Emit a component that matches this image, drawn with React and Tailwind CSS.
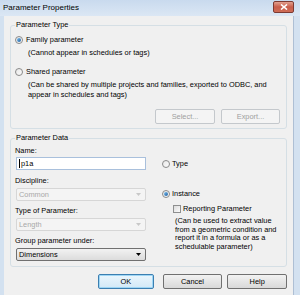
import React from "react";

const FONT = "font-['Liberation_Sans',Arial,sans-serif]";

function Radio({ checked }) {
  return (
    <span className="w-[8px] h-[8px] shrink-0 rounded-full border border-[#8a8a8a] bg-gradient-to-br from-[#e8e8e8] to-[#fbfbfb] flex items-center justify-center">
      {checked && <span className="w-[4px] h-[4px] rounded-full bg-gradient-to-br from-[#7fc2f2] to-[#1a5c9c]" />}
    </span>
  );
}

function Checkbox() {
  return <span className="w-[8px] h-[8px] shrink-0 border border-[#8e8f8f] bg-gradient-to-br from-[#dcdcdc] to-[#fbfbfb]" />;
}

function Btn({ children, disabled, primary, className = "" }) {
  const base = "h-[15px] flex items-center justify-center rounded-[2px] border";
  const look = disabled
    ? "border-[#c4c8cc] bg-[#f4f4f4] text-[#a0a0a0]"
    : primary
    ? "border-[#3c7fb1] bg-gradient-to-b from-[#eaf6fd] to-[#d3e9f7] text-black shadow-[inset_0_0_0_1px_#9ed6f5]"
    : "border-[#707070] bg-gradient-to-b from-[#f2f2f2] to-[#d9d9d9] text-black";
  return <div className={`${base} ${look} ${className}`}>{children}</div>;
}

function Select({ value, disabled }) {
  return (
    <div
      className={`ml-[1px] w-[130px] h-[13px] flex items-center justify-between pl-[2px] pr-[4px] rounded-[2px] border ${
        disabled
          ? "border-[#d6d6d6] bg-[#f4f4f4] text-[#a8a8a8]"
          : "border-[#707070] bg-gradient-to-b from-[#f2f2f2] to-[#dcdcdc] text-black"
      }`}
    >
      <span>{value}</span>
      <svg width="5" height="3" viewBox="0 0 5 3">
        <path d="M0 0h5L2.5 3z" fill={disabled ? "#c8c8c8" : "#000"} />
      </svg>
    </div>
  );
}

export default function App() {
  return (
    <div className={`w-[300px] h-[295px] flex flex-col bg-[#cfdff0] text-[7.4px] leading-[10px] text-black ${FONT}`}>
      {/* Title bar */}
      <div className="h-[16px] shrink-0 flex items-start justify-between bg-gradient-to-b from-[#c9daee] to-[#dbe7f4]">
        <span className="pl-[3px] pt-[2px] text-[8px] leading-[11px] text-black">Parameter Properties</span>
        <div className="mr-[6px] mt-[1px] w-[21px] h-[12px] rounded-[2px] border border-[#7d3a32] bg-gradient-to-b from-[#e2a08f] via-[#c85d4b] to-[#cf6d56] flex items-center justify-center">
          <svg width="8" height="6" viewBox="0 0 8 6">
            <path d="M1 0.5L7 5.5M7 0.5L1 5.5" stroke="#fff" strokeWidth="1.6" />
          </svg>
        </div>
      </div>

      <div className="flex-1 flex min-h-0">
        <div className="w-[4px] shrink-0 bg-[#d3e1f0]" />
        <div className="w-[290px] shrink-0 bg-[#f0f0f0] border-r border-[#aebfd4] flex flex-col pl-[6px] pr-[6px] pt-[4px]">
          {/* Parameter Type */}
          <fieldset className="w-[277px] border border-[#d5dfe5] rounded-[3px] pl-[4px] pr-[6px] pb-[4px]">
            <legend className="px-[1px] leading-[10px]">Parameter Type</legend>
            <div className="mt-[5px] flex items-center gap-[3px] h-[10px]">
              <Radio checked />
              <span>Family parameter</span>
            </div>
            <div className="mt-[3px] pl-[13px]">(Cannot appear in schedules or tags)</div>
            <div className="mt-[9px] flex items-center gap-[3px] h-[10px]">
              <Radio />
              <span>Shared parameter</span>
            </div>
            <div className="mt-[3px] pl-[13px]">
              <div>(Can be shared by multiple projects and families, exported to ODBC, and</div>
              <div>appear in schedules and tags)</div>
            </div>
            <div className="mt-[9px] flex justify-end gap-[6px]">
              <Btn disabled className="w-[60px]">Select...</Btn>
              <Btn disabled className="w-[59px]">Export...</Btn>
            </div>
          </fieldset>

          {/* Parameter Data */}
          <fieldset className="mt-[4px] w-[277px] border border-[#d5dfe5] rounded-[3px] pl-[4px] pr-[6px] pb-[5px]">
            <legend className="px-[1px] leading-[10px]">Parameter Data</legend>
            <div className="flex">
              <div className="w-[131px] flex flex-col">
                <div className="mt-[3px]">Name:</div>
                <div className="mt-[1px] ml-[1px] w-[130px] h-[13px] border border-[#a9c0dc] bg-white flex items-center pl-[2px]">
                  <span className="w-[1px] h-[9px] bg-black mr-[1px]" />
                  <span>p1a</span>
                </div>
                <div className="mt-[6px]">Discipline:</div>
                <div className="mt-[2px]"><Select value="Common" disabled /></div>
                <div className="mt-[5px]">Type of Parameter:</div>
                <div className="mt-[2px]"><Select value="Length" disabled /></div>
                <div className="mt-[5px]">Group parameter under:</div>
                <div className="mt-[2px]"><Select value="Dimensions" /></div>
              </div>
              <div className="ml-[16px] flex flex-col">
                <div className="mt-[16px] flex items-center gap-[2px] h-[10px]">
                  <Radio />
                  <span>Type</span>
                </div>
                <div className="mt-[20px] flex items-center gap-[2px] h-[10px]">
                  <Radio checked />
                  <span>Instance</span>
                </div>
                <div className="mt-[5px] ml-[11px] flex items-center gap-[2px] h-[10px]">
                  <Checkbox />
                  <span>Reporting Parameter</span>
                </div>
                <div className="mt-[3px] ml-[13px] leading-[8.7px]">
                  <div>(Can be used to extract value</div>
                  <div>from a geometric condition and</div>
                  <div>report it in a formula or as a</div>
                  <div>schedulable parameter)</div>
                </div>
              </div>
            </div>
          </fieldset>

          {/* Dialog buttons */}
          <div className="mt-[7px] flex">
            <Btn primary className="ml-[88px] w-[56px]">OK</Btn>
            <Btn className="ml-[9px] w-[60px]">Cancel</Btn>
            <Btn className="ml-[5px] w-[60px]">Help</Btn>
          </div>
        </div>
        <div className="flex-1 bg-[#d3e1f0]" />
      </div>
    </div>
  );
}
